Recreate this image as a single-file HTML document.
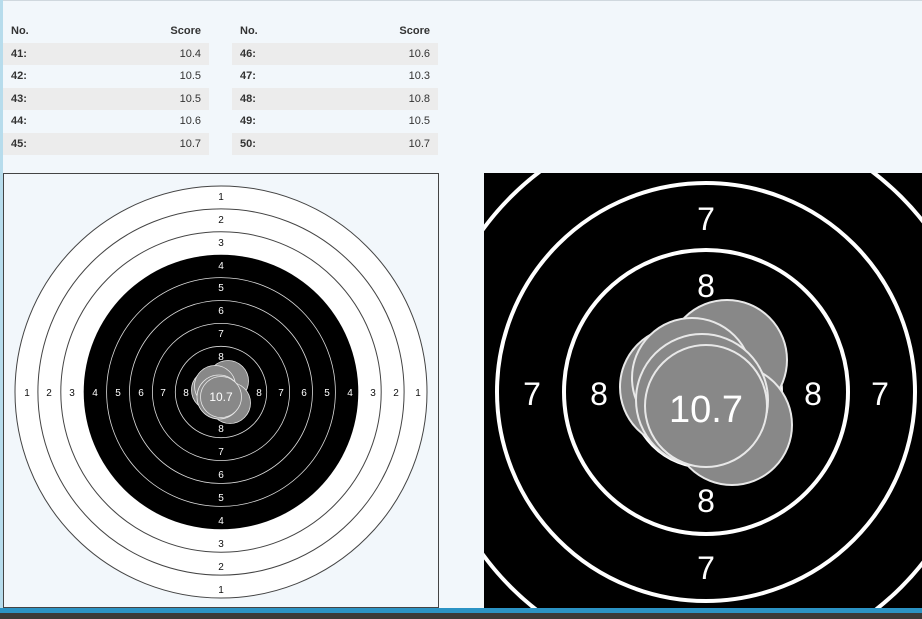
<!DOCTYPE html>
<html style="overflow:hidden;width:922px;height:619px"><head><style>
html,body{overflow:hidden}
body{margin:0;width:922px;height:619px;background:#f2f7fb;position:relative;overflow:hidden;font-family:"Liberation Sans",sans-serif;}
.lb{position:absolute;left:0;top:0;width:3px;height:608px;background:#b7dcec}
.tl{position:absolute;left:3px;top:0;right:0;height:1px;background:#d0d8de}
table{position:absolute;top:20px;border-collapse:collapse;font-size:11px;color:#333;width:206px}
td,th{height:22.5px;padding:0 8px;}
th{text-align:left;font-weight:bold}
th.r,td.r{text-align:right}
td.n{font-weight:bold}
tr.g td{background:#ececec}
.bb{position:absolute;left:0;top:608px;width:922px;height:5px;background:#2b93c4}
.dk{position:absolute;left:0;top:613px;width:922px;height:6px;background:#3a3a38}
svg{position:absolute;display:block}
</style></head><body>
<div class="lb"></div><div class="tl"></div>
<table style="left:3px"><tr><th>No.</th><th class="r">Score</th></tr>
<tr class="g"><td class="n">41:</td><td class="r">10.4</td></tr>
<tr><td class="n">42:</td><td class="r">10.5</td></tr>
<tr class="g"><td class="n">43:</td><td class="r">10.5</td></tr>
<tr><td class="n">44:</td><td class="r">10.6</td></tr>
<tr class="g"><td class="n">45:</td><td class="r">10.7</td></tr></table>
<table style="left:232px"><tr><th>No.</th><th class="r">Score</th></tr>
<tr class="g"><td class="n">46:</td><td class="r">10.6</td></tr>
<tr><td class="n">47:</td><td class="r">10.3</td></tr>
<tr class="g"><td class="n">48:</td><td class="r">10.8</td></tr>
<tr><td class="n">49:</td><td class="r">10.5</td></tr>
<tr class="g"><td class="n">50:</td><td class="r">10.7</td></tr></table>

<svg style="left:3px;top:173px" width="436" height="435" viewBox="3 173 436 435">
<rect x="3.5" y="173.5" width="435" height="434" fill="#f2f7fb" stroke="#444"/>
<g font-family="Liberation Sans, sans-serif" font-size="10" text-anchor="middle">
<circle cx="221" cy="392" r="206" fill="#fff" stroke="#444"/>
<circle cx="221" cy="392" r="183.1" fill="#fff" stroke="#444"/>
<circle cx="221" cy="392" r="160.2" fill="#fff" stroke="#444"/>
<circle cx="221" cy="392" r="137.3" fill="#000"/>
<g fill="none" stroke="#ddd" stroke-width="0.8">
<circle cx="221" cy="392" r="114.4"/><circle cx="221" cy="392" r="91.5"/><circle cx="221" cy="392" r="68.6"/><circle cx="221" cy="392" r="45.7"/><circle cx="221" cy="392" r="22.8"/></g>
<g fill="#111"><text x="221" y="200">1</text><text x="221" y="223">2</text><text x="221" y="246">3</text>
<text x="221" y="593">1</text><text x="221" y="570">2</text><text x="221" y="547">3</text>
<text x="27" y="396">1</text><text x="49" y="396">2</text><text x="72" y="396">3</text>
<text x="418" y="396">1</text><text x="396" y="396">2</text><text x="373" y="396">3</text></g>
<g fill="#fff"><text x="221" y="269">4</text><text x="221" y="291">5</text><text x="221" y="314">6</text><text x="221" y="337">7</text><text x="221" y="360">8</text>
<text x="221" y="524">4</text><text x="221" y="501">5</text><text x="221" y="478">6</text><text x="221" y="455">7</text><text x="221" y="432">8</text>
<text x="95" y="396">4</text><text x="118" y="396">5</text><text x="141" y="396">6</text><text x="163" y="396">7</text><text x="186" y="396">8</text>
<text x="350" y="396">4</text><text x="327" y="396">5</text><text x="304" y="396">6</text><text x="281" y="396">7</text><text x="259" y="396">8</text></g>
<g fill="#888" stroke="#e8e8e8" stroke-width="0.8">
<circle cx="228" cy="381" r="20.5"/><circle cx="212" cy="390" r="20.5"/><circle cx="230" cy="403" r="20.5"/><circle cx="215" cy="386" r="20.5"/><circle cx="219" cy="397" r="22"/><circle cx="221" cy="397" r="20.5"/></g>
<text x="221" y="401" fill="#fff" font-size="12">10.7</text>
</g></svg>

<svg style="left:484px;top:173px" width="438" height="435" viewBox="484 173 438 435">
<rect x="484" y="173" width="438" height="435" fill="#000"/>
<g fill="none" stroke="#fff" stroke-width="4">
<circle cx="706" cy="392" r="276"/><circle cx="706" cy="392" r="209"/><circle cx="706" cy="392" r="142"/><circle cx="706" cy="392" r="75"/></g>
<g fill="#fff" font-family="Liberation Sans, sans-serif" font-size="32" text-anchor="middle">
<text x="706" y="230">7</text><text x="706" y="579">7</text><text x="532" y="405">7</text><text x="880" y="405">7</text>
<text x="706" y="297">8</text><text x="706" y="512">8</text><text x="599" y="405">8</text><text x="813" y="405">8</text></g>
<g fill="#888" stroke="#e8e8e8" stroke-width="2">
<circle cx="727" cy="360" r="60"/><circle cx="680" cy="387" r="60"/><circle cx="732" cy="425" r="60"/><circle cx="692" cy="378" r="60"/><circle cx="702" cy="400" r="66"/><circle cx="706" cy="406" r="61"/></g>
<text x="706" y="422" fill="#fff" font-family="Liberation Sans, sans-serif" font-size="38" text-anchor="middle">10.7</text>
</svg>
<div class="bb"></div><div class="dk"></div>
</body></html>
